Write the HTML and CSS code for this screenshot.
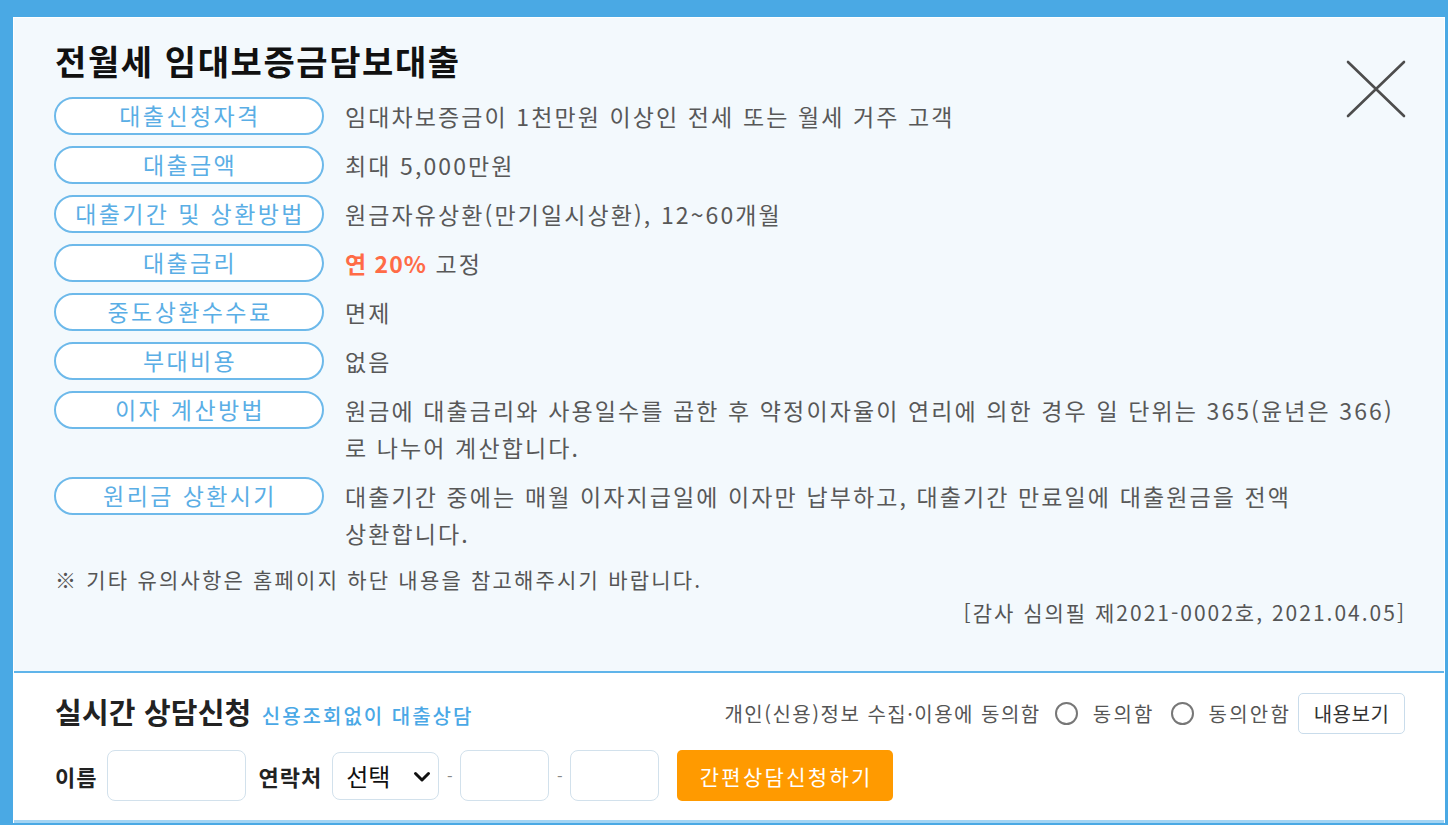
FILE: index.html
```html
<!DOCTYPE html>
<html lang="ko">
<head>
<meta charset="utf-8">
<title>전월세 임대보증금담보대출</title>
<link rel="stylesheet" href="styles.css">
</head>
<body>
<div class="frame">
  <div class="panel">
    <section class="info">
      <button class="close" type="button" aria-label="닫기">
        <svg width="60" height="58" viewBox="0 0 60 58"><path d="M2 2 L58 56 M58 2 L2 56" stroke="#4d4d4d" stroke-width="2.6" stroke-linecap="round" fill="none"/></svg>
      </button>
      <h1 class="title">전월세 임대보증금담보대출</h1>
      <dl class="rows">
        <div class="row"><dt class="pill">대출신청자격</dt><dd class="desc">임대차보증금이 1천만원 이상인 전세 또는 월세 거주 고객</dd></div>
        <div class="row"><dt class="pill">대출금액</dt><dd class="desc">최대 5,000만원</dd></div>
        <div class="row"><dt class="pill">대출기간 및 상환방법</dt><dd class="desc">원금자유상환(만기일시상환), 12~60개월</dd></div>
        <div class="row"><dt class="pill">대출금리</dt><dd class="desc"><strong class="rate">연 20%</strong> 고정</dd></div>
        <div class="row"><dt class="pill">중도상환수수료</dt><dd class="desc">면제</dd></div>
        <div class="row"><dt class="pill">부대비용</dt><dd class="desc">없음</dd></div>
        <div class="row"><dt class="pill">이자 계산방법</dt><dd class="desc">원금에 대출금리와 사용일수를 곱한 후 약정이자율이 연리에 의한 경우 일 단위는 365(윤년은 366)<br>로 나누어 계산합니다.</dd></div>
        <div class="row"><dt class="pill">원리금 상환시기</dt><dd class="desc">대출기간 중에는 매월 이자지급일에 이자만 납부하고, 대출기간 만료일에 대출원금을 전액<br>상환합니다.</dd></div>
      </dl>
      <p class="note">※ 기타 유의사항은 홈페이지 하단 내용을 참고해주시기 바랍니다.</p>
      <p class="stamp">[감사 심의필 제2021-0002호, 2021.04.05]</p>
    </section>
    <section class="consult">
      <div class="c-head">
        <h2 class="c-title">실시간 상담신청 <span class="c-sub">신용조회없이 대출상담</span></h2>
        <div class="agree">
          <span class="agree-text">개인(신용)정보 수집·이용에 동의함</span>
          <label class="radio"><span class="dot"></span>동의함</label>
          <label class="radio second"><span class="dot"></span>동의안함</label>
          <button class="view" type="button">내용보기</button>
        </div>
      </div>
      <div class="c-form">
        <span class="f-label">이름</span>
        <span class="field name"></span>
        <span class="f-label">연락처</span>
        <span class="select">선택
          <svg class="chev" width="18" height="12" viewBox="0 0 18 12"><path d="M2.5 2.5 L9 9 L15.5 2.5" stroke="#111" stroke-width="3" fill="none" stroke-linecap="round" stroke-linejoin="round"/></svg>
        </span>
        <span class="dash">-</span>
        <span class="field num"></span>
        <span class="dash">-</span>
        <span class="field num"></span>
        <button class="submit" type="button">간편상담신청하기</button>
      </div>
    </section>
  </div>
</div>
</body>
</html>
```
FILE: styles.css
```css
* { box-sizing: border-box; }
html, body { margin: 0; padding: 0; }
body {
  background: #4aa9e4;
  font-family: "Noto Sans CJK KR", "Noto Sans", sans-serif;
  width: 1448px;
  height: 825px;
  overflow: hidden;
}
.frame {
  padding: 17px 3px 0 13px;
}
.panel {
  background: #f3f9fd;
  border-top: 1px solid #ffffff;
  border-left: 1px solid #ffffff;
  border-right: 1px solid #ffffff;
}
.info {
  position: relative;
  padding: 22px 40px 0 40px;
  height: 655px;
  border-bottom: 2px solid #5fb4ea;
}
.close {
  position: absolute;
  top: 42px;
  right: 38px;
  border: 0;
  background: none;
  padding: 0;
  width: 60px;
  height: 58px;
}
.title {
  margin: 0 0 15px 1px;
  font-size: 34px;
  line-height: 42px;
  font-weight: 700;
  color: #111;
  letter-spacing: 1.6px;
}
.rows { margin: 0; }
.row {
  display: grid;
  grid-template-columns: 270px 1fr;
  column-gap: 21px;
  margin-bottom: 11px;
  align-items: start;
}
.pill {
  height: 38px;
  border: 2px solid #6db9ea;
  border-radius: 19px;
  background: #fff;
  color: #5aaee5;
  font-size: 23px;
  line-height: 33px;
  text-align: center;
  letter-spacing: 2.4px;
  padding-left: 2px;
}
.desc {
  margin: 0;
  color: #585858;
  font-size: 23px;
  line-height: 37px;
  letter-spacing: 2.1px;
  padding-top: 1px;
}
.rate { color: #ff6b47; font-weight: 700; letter-spacing: 1px; }
.note {
  margin: 12px 0 0 1px;
  font-size: 21px;
  line-height: 30px;
  color: #555;
  letter-spacing: 2.2px;
}
.stamp {
  margin: 3px -2px 0 0;
  text-align: right;
  font-size: 21px;
  line-height: 30px;
  color: #555;
  letter-spacing: 2px;
}
.consult {
  background: #fff;
  padding: 20px 39px 19px 41px;
  border-bottom: 3px solid #a3d4f3;
}
.c-head {
  display: flex;
  align-items: center;
  justify-content: space-between;
  height: 40px;
}
.c-title {
  margin: 0;
  font-size: 29px;
  font-weight: 700;
  color: #222;
  letter-spacing: 0.2px;
  line-height: 40px;
}
.c-sub {
  font-size: 20px;
  font-weight: 500;
  color: #4aa8e6;
  letter-spacing: 2px;
  margin-left: 2px;
}
.agree {
  display: flex;
  align-items: center;
  font-size: 20px;
  color: #555;
  letter-spacing: 1.5px;
}
.radio {
  display: flex;
  align-items: center;
  margin-left: 14px;
  letter-spacing: 2.2px;
}
.radio.second { margin-left: 16px; }
.dot {
  width: 23px;
  height: 23px;
  border: 2px solid #777;
  border-radius: 50%;
  margin-right: 15px;
  background: #fff;
}
.view {
  margin-left: 7px;
  height: 41px;
  width: 107px;
  border: 1.5px solid #c9dceb;
  border-radius: 5px;
  background: #fff;
  font-family: inherit;
  font-size: 20px;
  color: #333;
  letter-spacing: 0.5px;
  padding: 0;
}
.c-form {
  margin-top: 17px;
  display: flex;
  align-items: center;
  height: 51px;
}
.f-label {
  font-size: 22px;
  font-weight: 700;
  color: #222;
  letter-spacing: 1px;
}
.field {
  display: block;
  height: 51px;
  border: 1.5px solid #d2e1ec;
  border-radius: 8px;
  background: #fff;
}
.name { width: 139px; margin-left: 10px; margin-right: 12px; }
.num { width: 89px; }
.select {
  position: relative;
  display: flex;
  align-items: center;
  width: 107px;
  height: 48px;
  margin-left: 10px;
  padding-left: 13px;
  border: 1.5px solid #d2e1ec;
  border-radius: 8px;
  background: #fff;
  font-size: 24px;
  color: #111;
}
.chev {
  position: absolute;
  right: 7px;
  top: 18px;
}
.dash {
  color: #888;
  font-size: 16px;
  width: 21px;
  text-align: center;
}
.submit {
  margin-left: 18px;
  width: 216px;
  height: 51px;
  border: 0;
  border-radius: 5px;
  background: #ff9a00;
  color: #fff;
  font-family: inherit;
  font-size: 21px;
  letter-spacing: 2.3px;
  padding: 0 0 0 2px;
}
```
